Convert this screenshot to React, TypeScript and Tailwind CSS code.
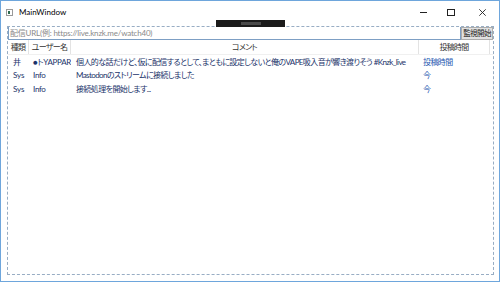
const font = "font-['Lato','Noto_Sans_CJK_JP',sans-serif] [font-feature-settings:'palt']";

const rows = [
  { kind: "井", user: "●トYAPPAR", comment: "個人的な話だけど、仮に配信するとして、まともに設定しないと俺のVAPE吸入音が響き渡りそう #Knzk_live", time: "投稿時間" },
  { kind: "Sys", user: "Info", comment: "Mastodonのストリームに接続しました", time: "今" },
  { kind: "Sys", user: "Info", comment: "接続処理を開始します...", time: "今" },
];

function TitleBar() {
  return (
    <div className="flex h-[22px] items-center">
      <div className="ml-[5px] flex h-[7px] w-[7px] items-center border border-[#9a9a9a] bg-white">
        <div className="ml-[1px] h-[3px] w-[2px] bg-[#2f6b50]" />
      </div>
      <span className="ml-[6px] text-[8px] leading-none text-black">MainWindow</span>
      <div className="ml-auto flex h-full items-center">
        <div className="flex h-full w-[28px] items-center justify-center">
          <div className="h-px w-[7px] bg-[#222]" />
        </div>
        <div className="flex h-full w-[28px] items-center justify-center">
          <div className="h-[7px] w-[8px] border border-[#222]" />
        </div>
        <div className="flex h-full w-[34px] items-center justify-center">
          <svg width="7" height="7" viewBox="0 0 7 7" stroke="#222" strokeWidth="0.9">
            <path d="M0.3 0.3 L6.7 6.7 M6.7 0.3 L0.3 6.7" />
          </svg>
        </div>
      </div>
    </div>
  );
}

export default function App() {
  return (
    <div className={`relative flex h-[282px] w-[500px] flex-col overflow-hidden border border-[#6ea6dc] bg-white ${font}`}>
      <TitleBar />
      {/* debug toolbar overlay */}
      <div className="absolute left-[215px] top-[19px] flex h-[7px] w-[69px] items-center justify-center bg-[#1b1b1b]">
        <div className="h-[3px] w-[20px] bg-[#4a4a4a]" />
      </div>
      <div className="mb-[6px] ml-[6px] mr-[5px] mt-[3px] flex flex-1 flex-col border border-dashed border-[#98adc4]">
        <div className="flex h-[13px]">
          <div className="flex flex-1 items-center border-b border-l border-r border-[#7d9fc4] pl-[1px] text-[8px] leading-none tracking-[-0.2px] text-[#8a8a8a]">
            配信URL(例: https://live.knzk.me/watch40)
          </div>
          <div className="flex w-[32px] items-center justify-center border border-[#adadad] bg-[#e1e1e1] text-[7.5px] leading-none tracking-[-0.6px] text-[#222]">
            監視開始
          </div>
        </div>
        <div className="flex flex-1 flex-col">
          <div className="flex h-[15px] items-center border-b border-[#f0f0f0] text-[8px] leading-none tracking-[-0.7px] text-[#333]">
            <div className="flex h-full w-[21px] items-center justify-center border-r border-[#e3e3e3]">種類</div>
            <div className="flex h-full w-[42px] items-center justify-center border-r border-[#e3e3e3]">ユーザー名</div>
            <div className="flex h-full w-[348px] items-center justify-center border-r border-[#e3e3e3]">コメント</div>
            <div className="flex h-full w-[71px] items-center justify-center border-r border-[#e3e3e3]">投稿時間</div>
            <div className="flex-1" />
          </div>
          {rows.map((r, i) => (
            <div key={i} className="flex h-[13.5px] items-center text-[8px] leading-none text-[#1a336a]">
              <div className="w-[21px] whitespace-nowrap pl-[5px] tracking-[-0.1px]">{r.kind}</div>
              <div className="w-[42px] overflow-hidden whitespace-nowrap pl-[4px] tracking-[-0.3px]">{r.user}</div>
              <div className="w-[348px] overflow-hidden whitespace-nowrap pl-[5px] tracking-[-0.6px]">{r.comment}</div>
              <div className="w-[71px] whitespace-nowrap pl-[4px] tracking-[-0.6px] text-[#2557b0]">{r.time}</div>
            </div>
          ))}
        </div>
      </div>
    </div>
  );
}
